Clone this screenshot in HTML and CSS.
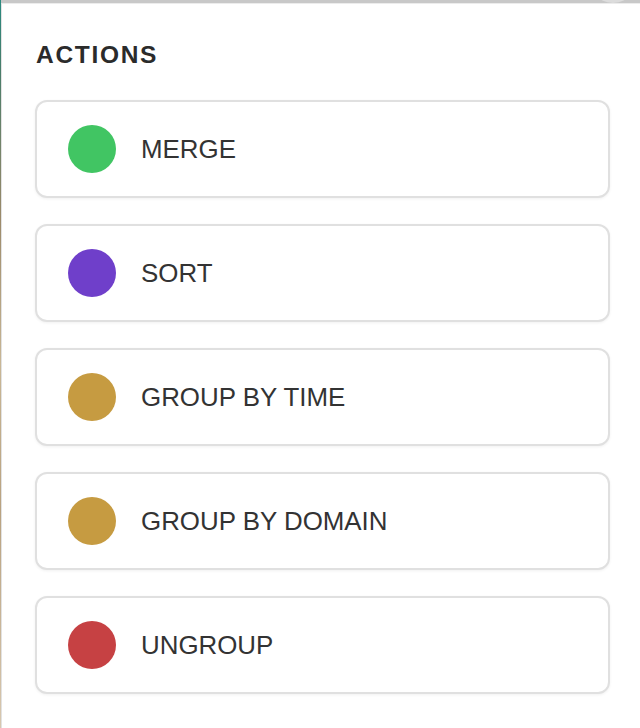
FILE: index.html
```html
<!DOCTYPE html>
<html>
<head>
<meta charset="utf-8">
<link rel="stylesheet" href="styles.css">
</head>
<body>
<div class="page">
  <div class="edge"></div>
  <div class="main">
    <div class="topbar"><span class="knob"></span></div>
    <div class="panel">
      <h2 class="title">ACTIONS</h2>
      <div class="list">
        <div class="card"><span class="dot green"></span><span class="label">MERGE</span></div>
        <div class="card"><span class="dot purple"></span><span class="label">SORT</span></div>
        <div class="card"><span class="dot gold"></span><span class="label">GROUP BY TIME</span></div>
        <div class="card"><span class="dot gold"></span><span class="label">GROUP BY DOMAIN</span></div>
        <div class="card"><span class="dot red"></span><span class="label">UNGROUP</span></div>
      </div>
    </div>
  </div>
</div>
</body>
</html>
```
FILE: styles.css
```css
html, body {
  margin: 0;
  padding: 0;
  background: #ffffff;
}
body {
  font-family: "Liberation Sans", Arial, sans-serif;
  color: #333333;
}
.page {
  display: flex;
  width: 640px;
  height: 728px;
  overflow: hidden;
}
.edge {
  width: 1px;
  flex: none;
  background: linear-gradient(to bottom, #2a8a80 0%, #4a7d6a 10%, #9c8a6a 30%, #c9b796 50%, #b9a280 70%, #d8c8b0 100%);
}
.main {
  flex: 1;
  display: flex;
  flex-direction: column;
  min-width: 0;
}
.topbar {
  height: 3px;
  background: #c8c8c8;
  position: relative;
  flex: none;
}
.knob {
  position: absolute;
  right: 12px;
  top: -14px;
  width: 30px;
  height: 17px;
  border-radius: 50%;
  background: #dcdcdc;
}
.panel {
  flex: 1;
  border-left: 1px solid #e2e2e2;
  border-top: 1px solid #ececec;
  padding: 37px 30px 0 34px;
}
.title {
  margin: 0 0 31px 0;
  font-size: 24.5px;
  line-height: 28px;
  font-weight: 700;
  letter-spacing: 1.7px;
  color: #2b2b2b;
}
.list {
  display: flex;
  flex-direction: column;
  gap: 26px;
  margin-left: -1px;
}
.card {
  height: 94px;
  border: 2px solid #e0e0e0;
  border-radius: 12px;
  box-shadow: 0 1px 3px rgba(0,0,0,0.06);
  display: flex;
  align-items: center;
  padding-left: 31px;
  background: #fff;
}
.dot {
  width: 48px;
  height: 48px;
  border-radius: 50%;
  flex: none;
  margin-right: 25px;
}
.green { background: #41c563; }
.purple { background: #6f3fca; }
.gold { background: #c69b41; }
.red { background: #c64143; }
.label {
  font-size: 25.9px;
  color: #333333;
  line-height: 30px;
}
```
